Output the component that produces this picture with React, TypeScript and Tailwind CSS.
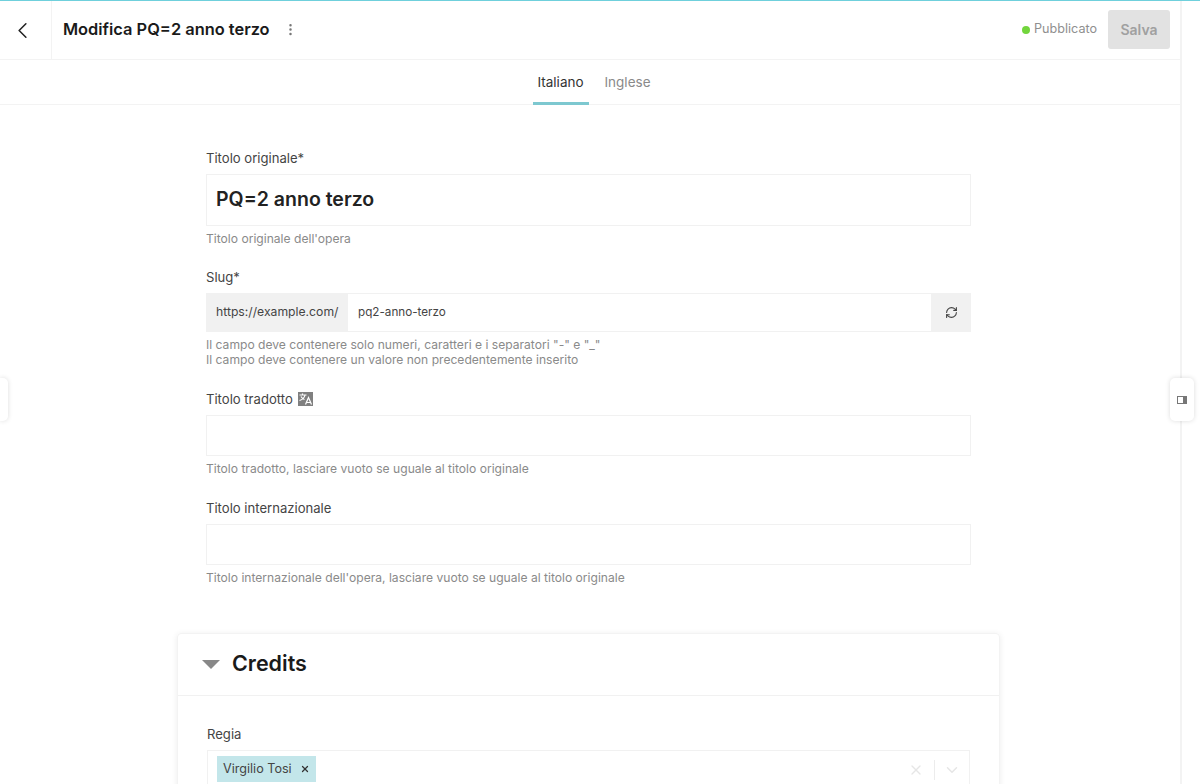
import { ChevronLeft, EllipsisVertical, RefreshCw, X, ChevronDown } from 'lucide-react'
import { ReactNode } from 'react'

function Field({ label, hint, children }: { label: ReactNode; hint: ReactNode; children: ReactNode }) {
  return (
    <div>
      <div className="h-[16px] mb-[8px] text-[13.1px] leading-[16px] text-[#444]">{label}</div>
      {children}
      <div className="mt-[5px] text-[12.1px] leading-[15px] text-[#8a8a8a]">{hint}</div>
    </div>
  )
}

function TranslateIcon() {
  return (
    <svg width="15" height="14" viewBox="0 0 15 14" className="inline-block ml-[5px] align-[-2px]">
      <rect width="15" height="14" fill="#808080" />
      <path d="M1.500 3h7M4.500 1.500V3M7 3c-.5 2.500-2.500 4.500-5.500 5.500M3 4.500c.8 1.500 2 2.500 3.500 3" stroke="#fff" strokeWidth="1.2" fill="none" />
      <path d="M7.500 12.500l3-7 3 7M8.500 10.500h4" stroke="#fff" strokeWidth="1.2" fill="none" />
    </svg>
  )
}

export default function App() {
  return (
    <div className="relative h-[784px] w-[1200px] overflow-hidden bg-white font-['Inter',sans-serif]">
      <div className="h-px bg-[#6fd0dc]" />
      <div className="w-[1182px] h-[783px] border-r-2 border-[#f3f3f3] overflow-hidden">
        <header className="flex items-center h-[59px] border-b border-[#f3f3f3]">
          <div className="flex items-center justify-center w-[52px] h-full border-r border-[#f3f3f3] pr-[6px]">
            <ChevronLeft size={27} strokeWidth={1.4} className="text-[#222]" />
          </div>
          <h1 className="ml-[11px] mb-[1px] text-[16.4px] font-semibold text-[#1a1a1a]">Modifica PQ=2 anno terzo</h1>
          <EllipsisVertical size={15} className="ml-[13px] mb-[1px] text-[#777]" />
          <div className="ml-auto flex items-center pr-[10px] mb-[1px]">
            <span className="w-[8px] h-[8px] rounded-full bg-[#72d53c] mr-[4px]" />
            <span className="text-[12.6px] text-[#8f8f8f]">Pubblicato</span>
            <button className="ml-[11px] w-[62px] h-[39px] rounded-[3px] bg-[#e2e2e2] text-[14px] font-semibold text-[#a0a0a0]">
              Salva
            </button>
          </div>
        </header>

        <nav className="flex justify-center gap-[14px] h-[45px] border-b border-[#f3f3f3] pl-[5px]">
          <div className="w-[56px] h-[45px] pt-[2px] flex items-center justify-center border-b-[3px] border-[#7dc8d0] text-[13.500px] text-[#333]">
            Italiano
          </div>
          <div className="w-[50px] h-[45px] pt-[2px] flex items-center justify-center border-b-[3px] border-transparent text-[13.500px] text-[#8a8a8a]">
            Inglese
          </div>
        </nav>

        <main className="w-[823px] ml-[177px] pt-[45px]">
          <div className="flex flex-col px-[29px] w-[823px]">
            <Field label="Titolo originale*" hint="Titolo originale dell'opera">
              <div className="h-[52px] flex items-center pl-[9px] border border-[#f1f1f1] text-[19.500px] font-semibold text-[#222]">
                PQ=2 anno terzo
              </div>
            </Field>
            <div className="mt-[23px]">
              <Field
                label="Slug*"
                hint={
                  <>
                    Il campo deve contenere solo numeri, caratteri e i separatori "-" e "_"
                    <br />
                    Il campo deve contenere un valore non precedentemente inserito
                  </>
                }
              >
                <div className="flex h-[39px] border-y border-r border-[#f1f1f1] text-[12.200px] text-[#444]">
                  <div className="flex items-center px-[10px] w-[142px] -my-px bg-[#f1f1f1] whitespace-nowrap">https://example.com/</div>
                  <div className="flex-1 flex items-center px-[10px] text-[11.700px]">pq2-anno-terzo</div>
                  <div className="flex items-center justify-center w-[40px] -my-px -mr-px bg-[#f1f1f1]">
                    <RefreshCw size={13} className="text-[#444]" />
                  </div>
                </div>
              </Field>
            </div>
            <div className="mt-[24px]">
              <Field
                label={
                  <>
                    Titolo tradotto
                    <TranslateIcon />
                  </>
                }
                hint="Titolo tradotto, lasciare vuoto se uguale al titolo originale"
              >
                <div className="h-[41px] border border-[#f1f1f1]" />
              </Field>
            </div>
            <div className="mt-[24px]">
              <Field label="Titolo internazionale" hint="Titolo internazionale dell'opera, lasciare vuoto se uguale al titolo originale">
                <div className="h-[41px] border border-[#f1f1f1]" />
              </Field>
            </div>
          </div>

          <section className="mt-[48px] rounded-[4px] border border-[#f3f3f3] shadow-[0_1px_6px_rgba(0,0,0,0.08)]">
            <div className="flex items-center h-[62px] border-b border-[#f1f1f1] pl-[24px]">
              <span className="w-0 h-0 border-x-[9px] border-x-transparent border-t-[9px] border-t-[#888]" />
              <h2 className="ml-[12px] mb-[2px] text-[21.500px] font-semibold text-[#1a1a1a]">Credits</h2>
            </div>
            <div className="px-[29px] pt-[30px] pb-[40px]">
              <div className="h-[16px] mb-[8px] text-[13.1px] leading-[16px] text-[#444]">Regia</div>
              <div className="flex items-center h-[40px] border border-[#f1f1f1] pl-[9px] pr-[8px]">
                <div className="flex items-center h-[26px] -mt-[2px] px-[6px] bg-[#c3e6ea] text-[12.600px] text-[#444]">
                  Virgilio Tosi
                  <X size={10} strokeWidth={3} className="ml-[8px] text-[#333]" />
                </div>
                <X size={16} strokeWidth={2} className="ml-auto text-[#e6e6e6]" />
                <span className="w-px h-[20px] bg-[#ececec] ml-[10px] mr-[8px]" />
                <ChevronDown size={18} strokeWidth={2} className="text-[#e6e6e6]" />
              </div>
            </div>
          </section>
        </main>
      </div>

      <div className="absolute left-0 top-[378px] w-[8px] h-[43px] bg-white rounded-r-[5px] shadow-[0_0_5px_rgba(0,0,0,0.14)]" />
      <div className="absolute left-[1170px] top-[378px] w-[24px] h-[43px] flex items-center justify-center bg-white rounded-[5px] shadow-[0_0_5px_rgba(0,0,0,0.14)]">
        <svg width="10" height="8" viewBox="0 0 10 8">
          <rect x="0.500" y="0.500" width="9" height="7" fill="none" stroke="#777" strokeWidth="1" />
          <rect x="6" y="1" width="3" height="6" fill="#777" />
        </svg>
      </div>
    </div>
  )
}
